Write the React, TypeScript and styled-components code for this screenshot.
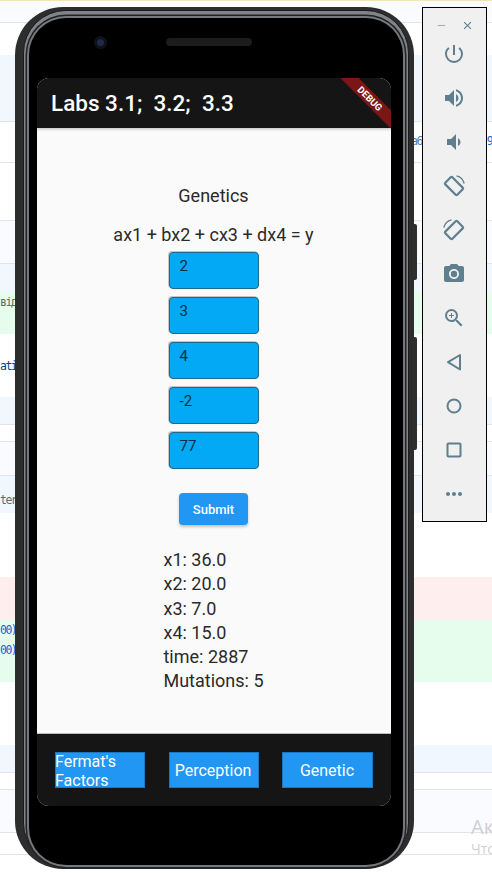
import React from "react";
import styled, { createGlobalStyle } from "styled-components";
import { MdPowerSettingsNew, MdVolumeUp, MdVolumeDown, MdPhotoCamera, MdZoomIn, MdMoreHoriz, MdClose, MdRemove } from "react-icons/md";

const Global = createGlobalStyle`
  html, body { margin: 0; padding: 0; background: #fff; }
  * { box-sizing: border-box; }
`;

const Page = styled.div`
  position: relative;
  width: 492px;
  height: 873px;
  overflow: hidden;
  font-family: Roboto, "Liberation Sans", sans-serif;
`;

const Backdrop = styled.div`
  display: flex;
  flex-direction: column;
  height: 100%;
`;

const Row = styled.div<{ $h: number; $bg?: string; $line?: boolean; $pad?: number }>`
  height: ${(p) => p.$h}px;
  flex: none;
  overflow: hidden;
  background: ${(p) => p.$bg ?? "#fff"};
  border-bottom: ${(p) => (p.$line ? "1px solid #e2e4e8" : "none")};
  padding-top: ${(p) => p.$pad ?? 0}px;
  font: 11.5px/20px "DejaVu Sans Mono", monospace;
  letter-spacing: -1.5px;
  white-space: pre;
`;

const Code = styled.div<{ $color: string; $x?: number }>`
  color: ${(p) => p.$color};
  margin-left: ${(p) => p.$x ?? 0}px;
`;

const CodeLine = styled.div`
  display: flex;
`;

const Watermark = styled.div`
  position: absolute;
  left: 471px;
  top: 813px;
  white-space: nowrap;
  color: #cfd0d2;
  font-family: "Open Sans", "Liberation Sans", sans-serif;
`;
const WmTitle = styled.div`
  font-size: 20px;
  line-height: 27px;
`;
const WmSub = styled.div`
  font-size: 14px;
  line-height: 18px;
`;

const Shell = styled.div`
  position: absolute;
  left: 15px;
  top: 7px;
  width: 399px;
  height: 862px;
  border-radius: 48px;
  background: #2d2d2d;
  padding: 3px 5px 3px 8px;
  display: flex;
`;

const SideKey = styled.div<{ $top: number; $h: number }>`
  position: absolute;
  left: 398px;
  top: ${(p) => p.$top}px;
  width: 4px;
  height: ${(p) => p.$h}px;
  background: #2f2f2f;
  border-radius: 0 2px 2px 0;
`;

const Rim = styled.div`
  flex: 1;
  display: flex;
  border-radius: 43px;
  background: #80848a;
  border: 1px solid #1c1c1c;
  padding: 7px 5px 0;
`;

const Face = styled.div`
  flex: 1;
  display: flex;
  flex-direction: column;
  background: #000;
  border-radius: 37px;
  padding: 0 12px 59px 8px;
  box-shadow: 0 0 0 2px #75797d, 0 0 0 3.5px #222;
`;

const Bezel = styled.div`
  height: 60px;
  flex: none;
  display: flex;
  align-items: center;
  padding: 0 0 12px 57px;
`;

const Camera = styled.div`
  width: 13px;
  height: 13px;
  border-radius: 50%;
  background: radial-gradient(circle, #1d2a4a 0 3px, #0f1116 4px, #14161a 100%);
`;

const Speaker = styled.div`
  width: 86px;
  height: 8px;
  margin-left: 59px;
  border-radius: 4px;
  background: #1c1c1c;
`;

const Screen = styled.div`
  flex: 1;
  position: relative;
  display: flex;
  flex-direction: column;
  overflow: hidden;
  border-radius: 12px;
  background: #fafafa;
`;

const AppBar = styled.div`
  height: 50px;
  flex: none;
  display: flex;
  align-items: center;
  padding-left: 14px;
  background: #151515;
  box-shadow: 0 1px 3px rgba(0, 0, 0, 0.25);
  color: #fff;
  font-size: 22.5px;
  font-weight: 500;
  white-space: pre;
`;

const DebugBanner = styled.div`
  position: absolute;
  left: 287.5px;
  top: 14px;
  width: 90px;
  height: 13px;
  transform: rotate(45deg);
  background: #7c1515;
  color: #fff;
  font: 700 9.5px/13px Roboto, "Liberation Sans", sans-serif;
  text-align: center;
`;

const Body = styled.main`
  flex: 1;
  display: flex;
  flex-direction: column;
  align-items: center;
  padding-top: 56px;
  color: #2a2a2a;
  font-size: 18px;
`;

const Heading = styled.div`
  line-height: 24px;
  margin-bottom: 15px;
  margin-right: 1px;
`;

const Equation = styled.div`
  line-height: 24px;
  margin-bottom: 5px;
  margin-right: 1px;
`;

const Fields = styled.div`
  display: flex;
  flex-direction: column;
  gap: 8px;
`;

const Field = styled.div`
  width: 90px;
  height: 37px;
  padding: 4px 9.6px;
  border-radius: 4px;
  background: #03a9f4;
  border: 1px solid #20688c;
  box-shadow: -1px -1px 0 rgba(130, 130, 130, 0.45);
  color: #0e2c44;
  font-size: 15px;
  line-height: 18px;
`;

const Submit = styled.button`
  width: 69px;
  height: 32px;
  margin-top: 24px;
  margin-right: 1px;
  border: 0;
  border-radius: 4px;
  background: #2196f3;
  color: #fff;
  font: 500 13px Roboto, "Liberation Sans", sans-serif;
  box-shadow: 0 2px 3px rgba(0, 0, 0, 0.22);
`;

const Results = styled.div`
  margin-top: 23px;
  margin-right: 1px;
  line-height: 24.3px;
`;

const BottomBar = styled.nav`
  height: 73px;
  flex: none;
  display: flex;
  justify-content: space-between;
  align-items: flex-start;
  padding: 18px 18px 0;
  background: #151515;
  border-top: 1px solid #bdbdbd;
`;

const NavButton = styled.button<{ $w?: number }>`
  width: ${(p) => p.$w ?? 90}px;
  height: 36px;
  padding: 0 1px 0 0;
  border: 0;
  box-shadow: inset 0 0 0 1px #1a78c2;
  background: #2196f3;
  color: #fff;
  font: 400 16px/19px Roboto, "Liberation Sans", sans-serif;
`;

const NavButtonWrapped = styled(NavButton)`
  text-align: left;
  padding: 0;
`;

const Toolbar = styled.aside`
  position: absolute;
  left: 422px;
  top: 7px;
  width: 65px;
  height: 515px;
  background: #f0f0f0;
  border: 1px solid #000;
  display: flex;
  flex-direction: column;
  align-items: center;
  color: #5f7f8f;
`;

const WindowControls = styled.div`
  width: 100%;
  height: 34px;
  flex: none;
  display: flex;
  justify-content: space-between;
  align-items: center;
  padding: 0 12px;
  font-size: 13px;
`;

const MinIcon = styled(MdRemove)`
  color: #9fb2bc;
`;

const Tools = styled.div`
  display: flex;
  flex-direction: column;
  gap: 20px;
  margin-right: 1px;
`;

const Tool = styled.div`
  width: 24px;
  height: 24px;
  display: flex;
  font-size: 24px;
`;

const RotateIcon = ({ flip }: { flip?: boolean }) => (
  <svg width="24" height="24" viewBox="0 0 24 24" fill="none" stroke="currentColor">
    <g transform={flip ? "translate(24 0) scale(-1 1)" : undefined}>
      <rect x="7" y="3.5" width="10" height="17" rx="1.2" strokeWidth="2.2" transform="rotate(-45 12 12)" />
      <path d="M14.5 1.8 A10.5 10.5 0 0 1 22.2 9.5" strokeWidth="1.3" />
    </g>
  </svg>
);

const BackIcon = () => (
  <svg width="24" height="24" viewBox="0 0 24 24" fill="none" stroke="currentColor" strokeWidth="2">
    <path d="M18 5 V19.5 L6 12.2 Z" strokeLinejoin="round" />
  </svg>
);
const CircleIcon = () => (
  <svg width="24" height="24" viewBox="0 0 24 24" fill="none" stroke="currentColor" strokeWidth="2">
    <circle cx="12" cy="12" r="6.5" />
  </svg>
);
const SquareIcon = () => (
  <svg width="24" height="24" viewBox="0 0 24 24" fill="none" stroke="currentColor" strokeWidth="2">
    <rect x="5.5" y="5.5" width="13" height="13" rx="0.8" />
  </svg>
);

export default function App() {
  return (
    <Page>
      <Global />
      <Backdrop>
        <Row $h={1} $bg="#f0e4b8" />
        <Row $h={22} $bg="#fafbfe" $line />
        <Row $h={32} />
        <Row $h={67} $bg="#f0f7fe" $line />
        <Row $h={41} $line $pad={9}>
          <CodeLine>
            <Code $color="#4a7fb5" $x={411}>a6</Code>
            <Code $color="#1a5fd0" $x={65}>9</Code>
          </CodeLine>
        </Row>
        <Row $h={58} $line />
        <Row $h={43} $bg="#fafbfe" $line />
        <Row $h={28} $bg="#f0f7fe" />
        <Row $h={42} $bg="#e6fcec">
          <Code $color="#55705f">від</Code>
        </Row>
        <Row $h={63} $pad={22}>
          <Code $color="#0b3f7a">ati</Code>
        </Row>
        <Row $h={28} $bg="#f0f7fe" $line />
        <Row $h={17} $line />
        <Row $h={34} $bg="#fafbfe" $line />
        <Row $h={37} $bg="#f0f7fe" $pad={14}>
          <Code $color="#5b6b78">ter</Code>
        </Row>
        <Row $h={64} />
        <Row $h={43} $bg="#feeeee" />
        <Row $h={62} $bg="#e6fcec">
          <Code $color="#1a5fd0">00)</Code>
          <Code $color="#1a5fd0">00)</Code>
        </Row>
        <Row $h={63} />
        <Row $h={28} $bg="#f0f7fe" $line />
        <Row $h={17} $line />
        <Row $h={43} $bg="#fafbfe" $line />
        <Row $h={22} $line />
        <Row $h={18} />
      </Backdrop>

      <Watermark>
        <WmTitle>Ак</WmTitle>
        <WmSub>Что</WmSub>
      </Watermark>

      <Shell>
        <SideKey $top={217} $h={56} />
        <SideKey $top={330} $h={113} />
        <Rim>
          <Face>
            <Bezel>
              <Camera />
              <Speaker />
            </Bezel>
            <Screen>
              <AppBar>{"Labs 3.1;  3.2;  3.3"}</AppBar>
              <DebugBanner>DEBUG</DebugBanner>
              <Body>
                <Heading>Genetics</Heading>
                <Equation>ax1 + bx2 + cx3 + dx4 = y</Equation>
                <Fields>
                  {["2", "3", "4", "-2", "77"].map((v) => (
                    <Field key={v}>{v}</Field>
                  ))}
                </Fields>
                <Submit>Submit</Submit>
                <Results>
                  <div>x1: 36.0</div>
                  <div>x2: 20.0</div>
                  <div>x3: 7.0</div>
                  <div>x4: 15.0</div>
                  <div>time: 2887</div>
                  <div>Mutations: 5</div>
                </Results>
              </Body>
              <BottomBar>
                <NavButtonWrapped>Fermat's Factors</NavButtonWrapped>
                <NavButton>Perception</NavButton>
                <NavButton $w={91}>Genetic</NavButton>
              </BottomBar>
            </Screen>
          </Face>
        </Rim>
      </Shell>

      <Toolbar>
        <WindowControls>
          <MinIcon />
          <MdClose />
        </WindowControls>
        <Tools>
          <Tool><MdPowerSettingsNew /></Tool>
          <Tool><MdVolumeUp /></Tool>
          <Tool><MdVolumeDown /></Tool>
          <Tool><RotateIcon /></Tool>
          <Tool><RotateIcon flip /></Tool>
          <Tool><MdPhotoCamera /></Tool>
          <Tool><MdZoomIn /></Tool>
          <Tool><BackIcon /></Tool>
          <Tool><CircleIcon /></Tool>
          <Tool><SquareIcon /></Tool>
          <Tool><MdMoreHoriz /></Tool>
        </Tools>
      </Toolbar>
    </Page>
  );
}
